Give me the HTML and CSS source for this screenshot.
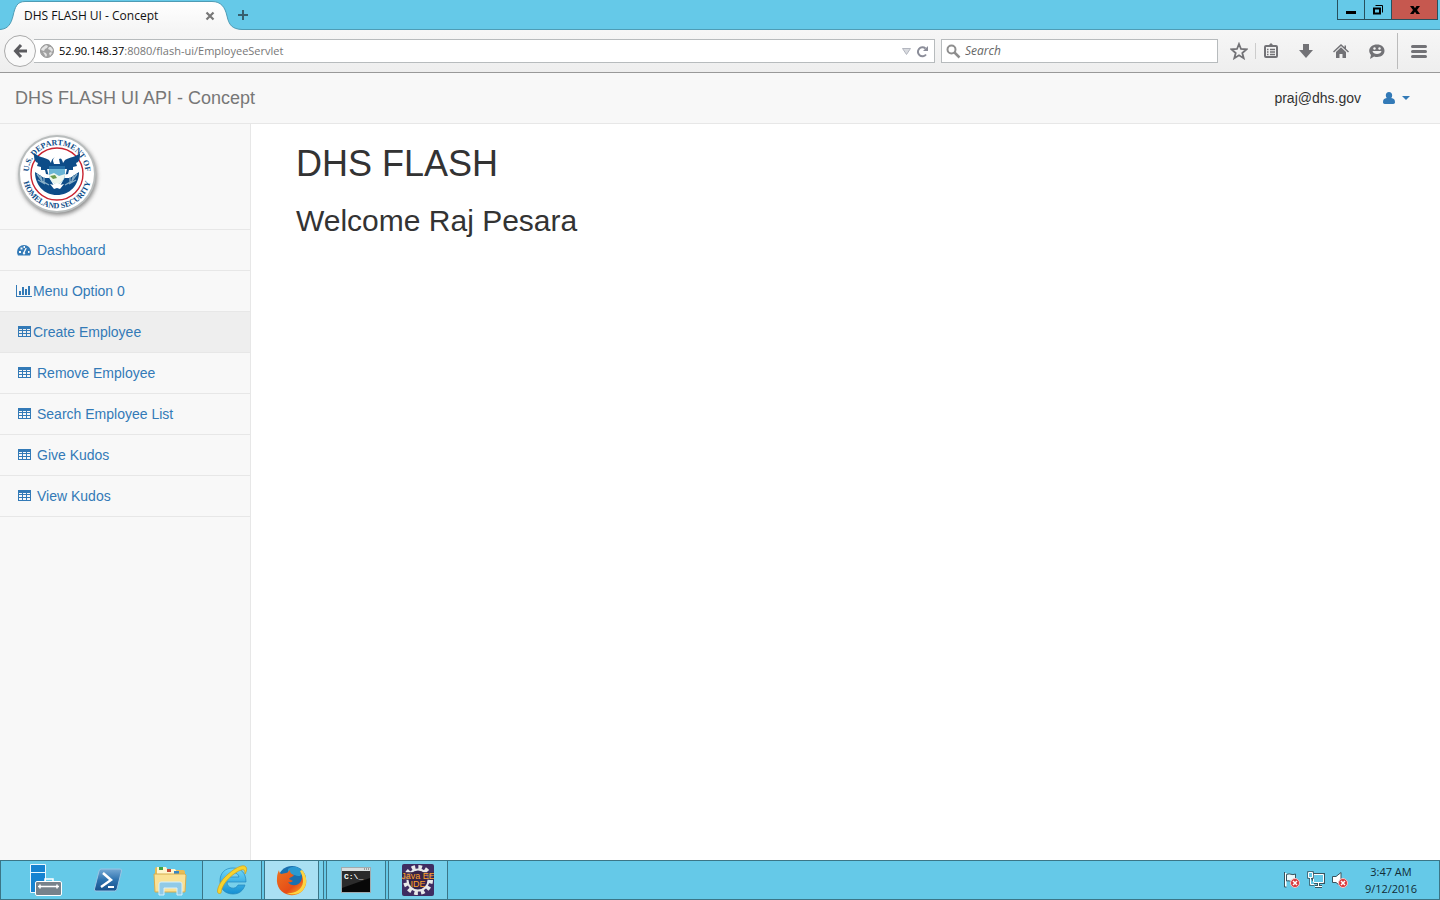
FILE: index.html
```html
<!DOCTYPE html>
<html lang="en">
<head>
<meta charset="utf-8">
<title>DHS FLASH UI - Concept</title>
<link rel="stylesheet" href="styles.css">
</head>
<body>
<svg class="defs" width="0" height="0" aria-hidden="true">
  <symbol id="table" viewBox="0 0 14 14"><path fill="currentColor" fill-rule="evenodd" d="M1 1h13v11H1zM2 4v1h3V4zm4 0v1h3V4zm4 0v1h3V4zM2 6v2h3V6zm4 0v2h3V6zm4 0v2h3V6zM2 9v2h3V9zm4 0v2h3V9zm4 0v2h3V9z"/></symbol>
  <symbol id="error" viewBox="0 0 10 10"><circle cx="5" cy="5" r="4.500" fill="#d9363a" stroke="#f6c8c8"/><path d="M3 3l4 4M7 3L3 7" stroke="#fff" stroke-width="1.500"/></symbol>
</svg>

<header class="titlebar">
  <div class="tab">
    <svg class="tab-shape" viewBox="0 0 242 30" aria-hidden="true"><defs><linearGradient id="tg" x2="0" y2="1"><stop stop-color="#fff"/><stop offset="1" stop-color="#f5f5f5"/></linearGradient></defs><path d="M0 29.500C8 29 11 24 13 16C15 7 17 1.500 25 1.500H212C221 1.500 225 7 227 16C229 25 232 29 242 29.500V30H0z" fill="url(#tg)"/><path d="M0 29.500C8 29 11 24 13 16C15 7 17 1.500 25 1.500H212C221 1.500 225 7 227 16C229 25 232 29 242 29.500" fill="none" stroke="#4e9cb5"/></svg>
    <span class="tab-title">DHS FLASH UI - Concept</span>
    <button class="plain" aria-label="Close tab"><svg width="10" height="10" viewBox="0 0 10 10"><path d="M1.500 1.500l7 7M8.500 1.500l-7 7" stroke="#777" stroke-width="2.200"/></svg></button>
  </div>
  <button class="plain" aria-label="New tab"><svg width="12" height="12" viewBox="0 0 12 12"><path d="M6 1v10M1 6h10" stroke="#37606f" stroke-width="2"/></svg></button>
  <div class="window-controls">
    <button aria-label="Minimize"><svg width="10" height="10" viewBox="0 0 10 10"><path d="M0 6h10v3H0z"/></svg></button>
    <button aria-label="Restore"><svg width="10" height="10" viewBox="0 0 10 10"><path d="M1 3.500h6v5H1z" fill="none" stroke="#000" stroke-width="2"/><path d="M2.500 .5h7v7" fill="none" stroke="#000"/></svg></button>
    <button class="close" aria-label="Close"><svg width="10" height="8" viewBox="0 0 10 8"><path d="M0 0h3.500L5 2.200 6.500 0H10L7 4l3 4H6.500L5 5.800 3.500 8H0l3-4z"/></svg></button>
  </div>
</header>

<div class="toolbar">
  <button class="back" aria-label="Back"><svg width="16" height="16" viewBox="0 0 16 16"><path d="M15 8H4M9 2L3.500 8 9 14" fill="none" stroke="#5b5b5f" stroke-width="3"/></svg></button>
  <label class="address">
    <svg width="14" height="14" viewBox="0 0 14 14"><circle cx="7" cy="7" r="6.500" fill="#a1a1a1" stroke="#999"/><path d="M2 4l4-3 2 1-1 2-2 1-1 2-3-1zM9 3l2 0 2 3-1 2-2-2-2-1zM3 8l3 1 1 2-1 2zM9 9l2-1 1 1-2 3z" fill="#e4e4e4"/></svg>
    <span class="url"><b>52.90.148.37</b>:8080/flash-ui/EmployeeServlet</span>
    <svg width="9" height="7" viewBox="0 0 9 7"><path d="M.5 .5h8l-4 6z" fill="#d8dadf" stroke="#b3b6bf"/></svg>
    <button class="plain" aria-label="Reload"><svg width="13" height="13" viewBox="0 0 13 13"><path d="M10 9.500A4.500 4.500 0 1 1 9.500 3.500" fill="none" stroke="#8b8d99" stroke-width="2"/><path d="M12 1v5H7z" fill="#8b8d99"/></svg></button>
  </label>
  <div class="search">
    <svg width="15" height="15" viewBox="0 0 15 15"><circle cx="5.500" cy="5.500" r="4" fill="none" stroke="#8e8e8e" stroke-width="2"/><path d="M8.500 8.500l5 5" stroke="#8e8e8e" stroke-width="2.500"/></svg>
    <input type="text" placeholder="Search" aria-label="Search">
  </div>
  <div class="tools">
    <button class="plain" aria-label="Bookmark"><svg width="18" height="18" viewBox="0 0 18 18"><path d="M9 2l2 5 5.500.3-4.200 3.700 1.400 5.200L9 13.300l-4.700 2.900 1.400-5.200L1.500 7.300 7 7z" fill="none" stroke="#727276" stroke-width="1.800"/></svg></button>
    <button class="plain list" aria-label="Bookmarks list"><svg width="16" height="16" viewBox="0 0 16 16"><path d="M5 3l3-3 3 3" fill="#727276"/><rect x="2" y="3" width="12" height="11" rx="1" fill="none" stroke="#727276" stroke-width="2"/><path d="M4 6.500h1.500M7 6.500h5M4 9h1.500M7 9h5M4 11.500h1.500M7 11.500h5" stroke="#727276" stroke-width="1.300"/></svg></button>
    <button class="plain" aria-label="Downloads"><svg width="16" height="16" viewBox="0 0 16 16"><path d="M5 1h6v6h4l-7 8-7-8h4z" fill="#727276"/></svg></button>
    <button class="plain" aria-label="Home"><svg width="16" height="16" viewBox="0 0 16 16"><path d="M0 8.500L8 1l3.500 3.300V2.500H13v3.200l3 2.800-1 1L8 3l-7 6.500zM3 9l5-4.700L13 9v6H9.500v-4h-3v4H3z" fill="#727276"/></svg></button>
    <button class="plain" aria-label="Chat"><svg width="18" height="17" viewBox="0 0 18 17"><path d="M9 1.500c4.500 0 7.500 2.600 7.500 6.300S13.500 14 9.300 14c-1.200 0-2.200-.2-3.200-.6L2 16l1-4C2 10.700 1.200 9.500 1.200 7.800 1.200 4.100 4.600 1.500 9 1.500z" fill="#727276"/><circle cx="6.500" cy="5.500" r="1.200" fill="#f2f2f2"/><circle cx="11.500" cy="5.500" r="1.200" fill="#f2f2f2"/><path d="M4.500 8h9c-.5 4-8.500 4-9 0z" fill="#f2f2f2"/></svg></button>
    <button class="plain menu" aria-label="Menu"><svg width="16" height="13" viewBox="0 0 16 13"><path d="M1.500 1.500h13M1.500 6.500h13M1.500 11.500h13" stroke="#727276" stroke-width="3" stroke-linecap="round"/></svg></button>
  </div>
</div>

<header class="navbar">
  <a class="brand" href="#">DHS FLASH UI API - Concept</a>
  <div class="account">
    <span>praj@dhs.gov</span>
    <button class="plain user" aria-label="Account"><svg width="12" height="13" viewBox="0 0 12 13"><path d="M6 0c2 0 3.200 1.400 3.200 3.400 0 1-.4 2-1 2.700C11 6.400 12 7.700 12 10.300c0 1-.7 1.700-1.700 1.700H1.700C.7 12 0 11.300 0 10.300c0-2.600 1-3.900 3.800-4.200-.6-.7-1-1.700-1-2.700C2.800 1.400 4 0 6 0z" fill="currentColor"/></svg><svg width="8" height="4" viewBox="0 0 8 4"><path d="M0 0h8L4 4z" fill="currentColor"/></svg></button>
  </div>
</header>

<div class="page">
  <nav class="sidebar">
    <div class="logo">
      <svg width="90" height="90" viewBox="0 0 90 90" role="img" aria-label="U.S. Department of Homeland Security">
        <defs>
          <filter id="sh" x="-20%" y="-20%" width="140%" height="140%"><feGaussianBlur stdDeviation="2"/></filter>
          <path id="top" d="M16.300 54A28.500 28.500 0 1 1 67.700 54"/>
          <path id="bottom" d="M9.200 32A34.300 34.300 0 1 0 74.800 32"/>
        </defs>
        <circle cx="43" cy="44" r="39" fill="#555" opacity=".7" filter="url(#sh)"/>
        <circle cx="42" cy="42" r="39" fill="#b9bdbd"/>
        <circle cx="42" cy="42" r="37" fill="#fff"/>
        <circle cx="42" cy="42" r="26" fill="#fff" stroke="#c9232f" stroke-width="1.400"/>
        <path d="M20 40c0 13 9 23 22 23s22-10 22-23l-9 6H29z" fill="#0d4c88"/>
        <path d="M19 21c4 4 10 4 15 7l2 3c1-8 11-8 12 0l2-3c5-3 11-3 15-7 0 4 0 7-2 9l-2 1 1 3-4 1v3l-4 0-1 4-5 1-6 3-6-3-5-1-1-4-4 0v-3l-4-1 1-3-2-1c-2-2-2-5-2-9z" fill="#0d4c88"/>
        <path d="M38 29c0-5 6-7 9-3l-3 1 1 5h-6z" fill="#fff"/>
        <path d="M32 37l2 8 5 9h6l5-9 2-8z" fill="#fff"/>
        <path d="M34 34h16v9c0 5-4 8-8 10-4-2-8-5-8-10z" fill="#6ab5d5"/>
        <path d="M34 34h16v3H34z" fill="#246da5"/>
        <path d="M34 43l5-2 5 3 6-2c0 5-4 9-8 11-4-2-8-5-8-10z" fill="#edf6ee"/>
        <path d="M35 44l5-1 2 3-4 1z" fill="#6b9b4b"/>
        <path d="M22 42l5 7 7 4M23 48l7 4M25 43l2 5M29 45v6M62 42l-5 7-7 4M61 48l-7 4M59 43l-2 5M55 45v6" fill="none" stroke="#87adc6" stroke-width="1.300"/>
        <path d="M35 52l4 1 3-2 3 2 4-1-4 5-3-1-3 1z" fill="#fff"/>
        <text class="seal-text" text-anchor="middle"><textPath href="#top" startOffset="50%">U.S. DEPARTMENT OF</textPath></text>
        <text class="seal-text" text-anchor="middle"><textPath href="#bottom" startOffset="50%">HOMELAND SECURITY</textPath></text>
      </svg>
    </div>
    <a href="#"><svg width="16" height="14" viewBox="0 0 16 14"><path fill="currentColor" fill-rule="evenodd" d="M1 9a7 7 0 0 1 14 0c0 1.300-.4 2.500-1 3.500H2C1.400 11.500 1 10.300 1 9zM3 8v2h2V8zM4.500 4.500v2h2v-2zM7.500 3v2h1.500V3zM12 8v2h1.500V8zM9.500 5L7.500 9c-1 .5-1 2.500.5 2.500s1.500-1.500.8-2.300l2-4z"/></svg><span class="spaced">Dashboard</span></a>
    <a href="#"><svg width="16" height="14" viewBox="0 0 16 14"><path fill="currentColor" d="M0 1h1v11h15v1H0zM3 7h2v4H3zM6 3h2v8H6zM9 5h2v6H9zM12 2h2v9h-2z"/></svg><span>Menu Option 0</span></a>
    <a class="active" href="#"><svg width="16" height="14"><use href="#table"/></svg><span>Create Employee</span></a>
    <a href="#"><svg width="16" height="14"><use href="#table"/></svg><span class="spaced">Remove Employee</span></a>
    <a href="#"><svg width="16" height="14"><use href="#table"/></svg><span class="spaced">Search Employee List</span></a>
    <a href="#"><svg width="16" height="14"><use href="#table"/></svg><span class="spaced">Give Kudos</span></a>
    <a href="#"><svg width="16" height="14"><use href="#table"/></svg><span class="spaced">View Kudos</span></a>
  </nav>
  <main>
    <h1>DHS FLASH</h1>
    <h2>Welcome Raj Pesara</h2>
  </main>
</div>

<footer class="taskbar">
  <div class="tasks">
    <button aria-label="Server Manager"><svg width="34" height="34" viewBox="0 0 34 34"><path d="M1.500 1.500h15v28h-15z" fill="#1683d1" stroke="#e9f7ff"/><path d="M1.500 9.500h15" stroke="#e9f7ff"/><path d="M16 19v-3h8v3" fill="none" stroke="#fff" stroke-width="1.500"/><rect x="6.500" y="18.500" width="26" height="14" rx="1.500" fill="#77828b" stroke="#fff"/><path d="M9 23.500h21M11 21.500v4M28 21.500v4" stroke="#fff" stroke-width="1.500"/></svg></button>
    <button aria-label="PowerShell"><svg width="30" height="26" viewBox="0 0 30 26"><defs><linearGradient id="ps" x2="0" y2="1"><stop stop-color="#76a9d4"/><stop offset=".5" stop-color="#2d72af"/><stop offset="1" stop-color="#17508b"/></linearGradient></defs><path d="M8 2h19q2 0 1.500 2L24 22q-.5 2-2.500 2H3Q1 24 1.500 22L6 4q.5-2 2-2z" fill="url(#ps)" stroke="#9bc5e4"/><path d="M10 6l8 7-10 7" fill="none" stroke="#fff" stroke-width="2.500"/><path d="M15 20h6" stroke="#fff" stroke-width="2"/></svg></button>
    <button aria-label="File Explorer"><svg width="34" height="32" viewBox="0 0 34 32"><path d="M2 5q0-2 2-2h6l2 3h18q2 0 2 2v20H2z" fill="#e7bd55"/><path d="M4 6V3h9l2 3h6l2 3v3H4zM12 8V5h10l2 3v4H12z" fill="#fff5cc"/><path d="M6 3h4v3H6z" fill="#3da345"/><path d="M14 5h4v3h-4z" fill="#c64b34"/><path d="M21 7h5v3h-5z" fill="#3786c3"/><path d="M1 10h31l1 1-1 17H2z" fill="#fae195" stroke="#d5ad4f"/><path d="M6 31V20q0-2 2-2h19q2 0 2 2v11h-5v-7H11v7z" fill="#91cae7" stroke="#d7f0fb"/></svg></button>
    <button class="open" aria-label="Internet Explorer"><svg width="34" height="34" viewBox="0 0 34 34"><defs><linearGradient id="ie" x2="0" y2="1"><stop stop-color="#72d9fa"/><stop offset="1" stop-color="#148fd2"/></linearGradient></defs><path fill="url(#ie)" stroke="#2386bd" stroke-width=".7" fill-rule="evenodd" d="M18 5C26 5 31 10 31 19H12c0 7 9 8 11 3h7c-2 6-6 9-12 9C10 31 5 26 5 18S10 5 18 5zm-6 9h12c-1-6-11-6-12 0z"/><path d="M6 30C0 33 2 22 10 14S28 0 31 4c1 1 1 4-1 7 0-4-1-5-4-4C20 9 7 19 6 30z" fill="#f7d32e" stroke="#cf9d1c" stroke-width=".7"/></svg></button>
    <button class="open current" aria-label="Firefox"><svg width="32" height="32" viewBox="0 0 32 32"><defs><linearGradient id="ff" x2="1" y2="1"><stop stop-color="#ed731f"/><stop offset=".6" stop-color="#e64d17"/><stop offset="1" stop-color="#ffc42b"/></linearGradient></defs><circle cx="16" cy="16" r="14" fill="#1970af"/><path d="M12 5c5-4 12-2 15 3l-3 4c-5 0-7-2-12-2z" fill="#2b9ad1"/><path d="M3 6c0 2 1 3 2 4l5-1c2 0 2-2 4-3 0 3 1 4 4 5-1 2-4 2-5 4l4 2c-2 2-5 1-5 1 2 4 10 5 13-1 2-4 1-8-1-10 5 3 7 8 6 13-2 9-10 12-16 11C5 30 0 22 1 14c0-3 1-6 2-8z" fill="url(#ff)"/><path d="M26 6c5 5 6 14 1 20-4 5-12 5-17 3 7 1 16-2 17-11 0-4-1-8-3-11z" fill="#fcd542"/></svg></button>
    <button class="open" aria-label="Command Prompt"><svg width="30" height="26" viewBox="0 0 30 26"><rect x=".5" y=".5" width="29" height="25" fill="#080808" stroke="#9faaae"/><path d="M1 1h28v3H1z" fill="#d9dddd"/><path d="M23 2h1M25 2h1M27 2h1" stroke="#555"/><path d="M1 4h28v7L1 21z" fill="#2b2b2b"/><text class="cmd-text" x="3" y="12">C:\_</text></svg></button>
    <button class="open" aria-label="Java EE IDE"><svg width="32" height="32" viewBox="0 0 32 32"><rect width="32" height="32" rx="2" fill="#3f2c61"/><circle cx="16" cy="16" r="12.500" fill="none" stroke="#e8e8e8" stroke-width="5" stroke-dasharray="3.500 3.045"/><circle cx="16" cy="16" r="10.500" fill="#33214c" stroke="#e8e8e8" stroke-width="2"/><path d="M0 8h32v8H0zM9 16h14v7H9z" fill="#3a2546" opacity=".8"/><text class="java-text" x="16" y="15" text-anchor="middle">Java EE</text><text class="java-text" x="16" y="23" text-anchor="middle">IDE</text></svg></button>
  </div>
  <div class="tray">
    <svg width="18" height="18" viewBox="0 0 18 18"><path d="M2.500 2v14" stroke="#fff" stroke-width="2"/><path d="M3.500 3.500c4-2 5 1.500 9-.5v7c-4 2-5-1-9 0z" fill="#e9f7fb" stroke="#39545e"/><path d="M1.500 1v15h2" fill="none" stroke="#39545e"/><use href="#error" x="7" y="7" width="10" height="10"/></svg>
    <svg width="18" height="18" viewBox="0 0 18 18"><path d="M6.500 3.500h10v8h-10zM11.500 12v3M8 15.500h7" fill="none" stroke="#39545e" stroke-width="3"/><path d="M6.500 3.500h10v8h-10zM11.500 12v3M8 15.500h7" fill="#65c9e8" stroke="#fff"/><path d="M1.500 1.500h4v5h-4zM3.500 7v6.500h4" fill="#65c9e8" stroke="#39545e" stroke-width="2.500"/><path d="M1.500 1.500h4v5h-4zM3.500 7v6.500h4" fill="#65c9e8" stroke="#fff"/></svg>
    <svg width="18" height="18" viewBox="0 0 18 18"><path d="M1.500 5.500H5l5-4v14l-5-4H1.500z" fill="#fff" stroke="#39545e"/><use href="#error" x="7" y="7" width="10" height="10"/></svg>
  </div>
  <time class="clock">3:47 AM<br>9/12/2016</time>
</footer>
</body>
</html>
```
FILE: styles.css
```css
* { box-sizing: border-box; }
html, body { height: 100%; }
body {
  margin: 0;
  display: flex;
  flex-direction: column;
  font-family: "Liberation Sans", Arial, sans-serif;
  font-size: 14px;
  line-height: 20px;
  color: #333;
  background: #fff;
  overflow: hidden;
}
svg { display: block; flex: none; }
.defs { position: absolute; }
a { color: #337ab7; text-decoration: none; }
button { font: inherit; }
.plain {
  display: flex;
  align-items: center;
  padding: 0;
  border: 0;
  background: none;
}

.titlebar, .toolbar, .taskbar { font-family: "Open Sans", "Noto Sans", sans-serif; font-size: 12px; }

.titlebar {
  display: flex;
  align-items: center;
  flex: none;
  height: 30px;
  background: #65c9e8;
  box-shadow: inset 0 -1px #4e9cb5;
}
.tab {
  position: relative;
  display: flex;
  align-items: center;
  justify-content: space-between;
  width: 237px;
  height: 30px;
  padding: 2px 22px 0 24px;
  color: #111;
}
.tab-shape { position: absolute; left: 0; top: 0; width: 242px; height: 30px; }
.tab-title, .tab button { position: relative; }
.window-controls { display: flex; align-self: flex-start; margin-left: auto; padding-right: 2px; }
.window-controls button {
  display: flex;
  align-items: center;
  justify-content: center;
  width: 27px;
  height: 20px;
  padding: 0;
  border: 1px solid #27505d;
  border-width: 0 0 1px 1px;
  background: none;
}
.window-controls .close { width: 47px; border-right-width: 1px; background: #c6584f; }

.toolbar {
  display: flex;
  align-items: center;
  flex: none;
  height: 43px;
  padding: 0 13px 0 4px;
  border-bottom: 1px solid #999;
  background: linear-gradient(#f6f6f6, #eee);
}
.back {
  position: relative;
  display: flex;
  align-items: center;
  justify-content: center;
  flex: none;
  width: 32px;
  height: 32px;
  padding: 0;
  border: 1px solid #aaa;
  border-radius: 50%;
  background: #f9f9f9;
}
.address, .search {
  display: flex;
  align-items: center;
  height: 24px;
  border: 1px solid #b7bbbd;
  background: #fff;
}
.address { flex: 1; gap: 5px; margin-left: -2px; padding: 0 5px 0 6px; border-left: 0; }
.url { flex: 1; font-size: 11px; color: #777; }
.url b { font-weight: 400; color: #000; }
.search { width: 277px; gap: 4px; margin-left: 6px; padding: 0 4px; }
.search input {
  flex: 1;
  min-width: 0;
  padding: 0;
  border: 0;
  outline: 0;
  background: none;
  font: italic 12px/18px "Open Sans", "Noto Sans", sans-serif;
}
.search input::placeholder { color: #666; opacity: 1; }
.tools { display: flex; align-items: center; gap: 19px; margin-left: 12px; }
.tools .list { margin-left: -12px; padding-left: 7px; border-left: 1px solid #ccc; }
.tools .menu { height: 36px; margin-left: -8px; padding-left: 13px; border-left: 1px solid #bbb; }

.navbar {
  display: flex;
  align-items: center;
  justify-content: space-between;
  flex: none;
  height: 51px;
  padding: 0 30px 0 15px;
  border-bottom: 1px solid #e7e7e7;
  background: #f8f8f8;
}
.brand { font-size: 18px; color: #777; }
.account { display: flex; align-items: center; gap: 22px; }
.user { gap: 7px; color: #337ab7; }

.page { display: flex; flex: 1; min-height: 0; }
.sidebar { flex: none; width: 251px; border-right: 1px solid #e7e7e7; background: #f8f8f8; }
.logo { padding: 8px 15px 7px; border-bottom: 1px solid #e7e7e7; }
.sidebar a {
  display: flex;
  align-items: center;
  padding: 10px 16px;
  border-bottom: 1px solid #e7e7e7;
}
.sidebar .active { background: #eee; }
.sidebar span { margin-left: 1px; }
.sidebar .spaced { margin-left: 5px; }
.seal-text { font: bold 8px "Liberation Serif", serif; fill: #0d4c88; }
main { flex: 1; padding: 0 45px; }
h1, h2 { margin: 20px 0; font-weight: 400; }
h1 { font-size: 36px; line-height: 40px; }
h2 { font-size: 30px; line-height: 33px; }

.taskbar {
  display: flex;
  align-items: center;
  flex: none;
  height: 40px;
  padding: 0 22px 0 15px;
  border: 1px solid #3b7587;
  background: #65c9e8;
  color: #122c36;
}
.tasks { display: flex; align-self: stretch; gap: 2px; }
.tasks button {
  display: flex;
  align-items: center;
  justify-content: center;
  width: 60px;
  padding: 0;
  border: 0;
  background: none;
}
.tasks .open { border: solid #3b7587; border-width: 0 1px; background: #78d0eb; }
.tasks .current { padding-right: 4px; background: #a9e0f3; box-shadow: inset -4px 0 #78d0eb, inset -5px 0 #3b7587; }
.tray { display: flex; gap: 6px; margin-left: auto; }
.clock { margin-left: 16px; font-size: 11px; line-height: 17px; text-align: center; }
.cmd-text { font: bold 8px "Liberation Mono", monospace; fill: #fff; }
.java-text { font: 9px "Liberation Sans", sans-serif; fill: #ffa02a; }
```
